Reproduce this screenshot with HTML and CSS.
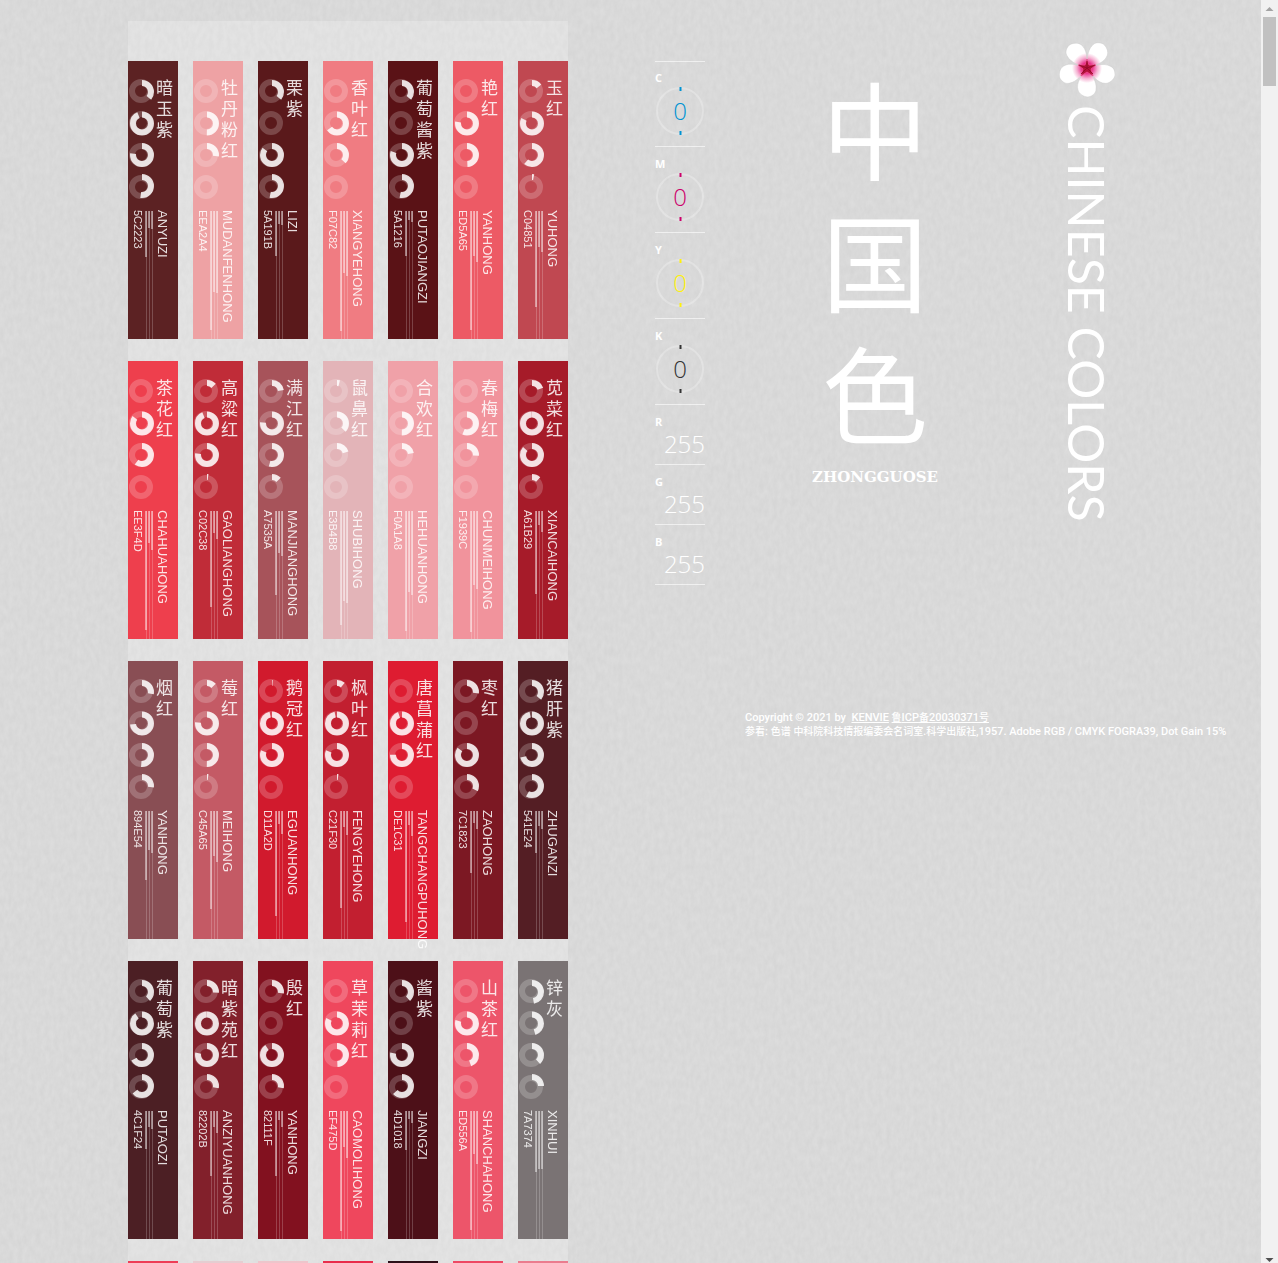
FILE: index.html
```html
<!DOCTYPE html>
<html lang="zh-CN">
<head>
<meta charset="utf-8">
<title>中国色</title>
<link rel="stylesheet" href="styles.css">
</head>
<body>
<svg class="paper" aria-hidden="true">
  <filter id="grain" x="0" y="0" width="100%" height="100%" color-interpolation-filters="sRGB">
    <feTurbulence type="fractalNoise" baseFrequency="0.22 0.12" numOctaves="4" seed="8" stitchTiles="stitch"/>
    <feColorMatrix values="0.04 0 0 0 0.831  0.04 0 0 0 0.831  0.04 0 0 0 0.831  0 0 0 0 1"/>
  </filter>
  <rect width="100%" height="100%" filter="url(#grain)"/>
</svg>
<main class="page">
  <nav class="palette" aria-label="颜色"><ul class="swatches" id="swatches"></ul></nav>

  <dl class="meters" id="meters"></dl>

  <section class="intro">
    <div class="titles">
      <header class="brand">
        <h1 class="brand-name">中国色</h1>
        <p class="brand-pinyin">ZHONGGUOSE</p>
      </header>
      <div class="english">
        <svg class="flower" viewBox="0 0 56 56" aria-hidden="true">
          <defs>
            <radialGradient id="bloom" gradientUnits="userSpaceOnUse" cx="28" cy="26" r="15">
              <stop offset="0" stop-color="#d4004f"/>
              <stop offset=".35" stop-color="#e8308a"/>
              <stop offset=".7" stop-color="#f6b3d3"/>
              <stop offset="1" stop-color="#fff"/>
            </radialGradient>
          </defs>
          <g fill="url(#bloom)" stroke="#c9c9c9" stroke-width=".4">
            <path id="petal" d="M28 26C22 34 17 41 19 48c1 4 6 7 10 7 5-1 8-4 8-8 1-7-4-14-9-21z"/>
            <use href="#petal" transform="rotate(72 28 26)"/>
            <use href="#petal" transform="rotate(144 28 26)"/>
            <use href="#petal" transform="rotate(216 28 26)"/>
            <use href="#petal" transform="rotate(288 28 26)"/>
          </g>
          <path d="M28 17l2 6 7 0-5 4 2 7-6-4-6 4 2-7-5-4 7 0z" fill="#b3123a" stroke="#ef4f8f" stroke-width=".8"/>
          <path d="M28 19v7l6 6M28 26l-6 6M28 26l8-3M28 26l-8-3" fill="none" stroke="#8c0a26" stroke-width=".8"/>
        </svg>
        <p class="english-name">CHINESE COLORS</p>
      </div>
    </div>
    <footer class="credits">
      <p>Copyright © 2021 by &nbsp;<a href="#kenvie">KENVIE</a> <a href="#icp"><span class="han">鲁</span>ICP<span class="han">备</span>20030371<span class="han">号</span></a></p>
      <p><span class="han">参看</span>: <span class="han">色谱</span> <span class="han">中科院科技情报编委会名词室.科学出版社,</span>1957. Adobe RGB / CMYK FOGRA39, Dot Gain 15%</p>
    </footer>
  </section>
</main>
<div class="scrollbar" aria-hidden="true">
  <svg viewBox="0 0 17 17"><path d="M4.500 11h8L8.500 7z" fill="#a3a3a3"/></svg>
  <div class="thumb"></div>
  <svg class="down" viewBox="0 0 17 17"><path d="M4.500 12h8L8.500 16z" fill="#505050"/></svg>
</div>
<script src="app.js"></script>
</body>
</html>
```
FILE: styles.css
```css
* { box-sizing: border-box; }

body {
  margin: 0;
  height: 100vh;
  display: flex;
  overflow: hidden;
  background: #d9d9d9;
  color: #fff;
  font-family: "Open Sans", "Noto Sans CJK SC", sans-serif;
}

h1, p, dl, dd, ul { margin: 0; padding: 0; }

a { color: inherit; }

.paper {
  position: absolute;
  inset: 0;
  width: 100%;
  height: 100%;
  z-index: -1;
}

.page {
  flex: 1;
  min-width: 0;
  display: flex;
  align-items: flex-start;
  padding-left: 128px;
  overflow-y: auto;
  scrollbar-width: none;
}

/* Palette */
.palette {
  flex: none;
  margin-top: 21px;
  padding-top: 40px;
  background: rgba(255, 255, 255, .22);
}

.swatches {
  display: grid;
  grid-template-columns: repeat(7, 50px);
  gap: 22px 15px;
  list-style: none;
}

.swatch {
  display: block;
  height: 278px;
  text-decoration: none;
}

.swatch-top {
  display: flex;
  height: 149px;
  padding-top: 17px;
}

.rings {
  flex: none;
  width: 27px;
  height: 122px;
}

.name {
  writing-mode: vertical-rl;
  width: 19px;
  font-family: "Noto Sans CJK SC", sans-serif;
  font-size: 17px;
  line-height: 19px;
  letter-spacing: 4px;
  padding-top: 1px;
  opacity: .85;
}

.swatch-bottom {
  display: flex;
  height: 129px;
}

.hex, .pinyin {
  writing-mode: vertical-rl;
  font-family: "Liberation Sans", sans-serif;
  white-space: nowrap;
  opacity: .85;
}

.hex {
  width: 17px;
  font-size: 11px;
  line-height: 15px;
}

.pinyin {
  width: 16px;
  font-size: 13px;
  line-height: 16px;
}

.bars {
  display: flex;
  gap: 1px;
  width: 8px;
  margin-right: 1px;
  padding-top: 1px;
}

.bar {
  display: flex;
  justify-content: flex-end;
  width: 2px;
  height: 128px;
  background: linear-gradient(rgba(255, 255, 255, .2), rgba(255, 255, 255, .2)) right / 1px 100% no-repeat;
}

.bar-fill {
  width: 2px;
  background: rgba(255, 255, 255, .45);
}

/* CMYK and RGB readout */
.meters {
  flex: none;
  width: 50px;
  margin: 61px 40px 0 87px;
  border-top: 1px solid rgba(255, 255, 255, .6);
}

.meter {
  height: 60px;
  border-bottom: 1px solid rgba(255, 255, 255, .6);
}

.meter.round { height: 86px; }

.meter:first-child { height: 85px; }

.meter dt {
  padding-top: 9px;
  font-size: 11px;
  font-weight: 700;
  line-height: 15px;
}

.meter dd {
  font-size: 24px;
  font-weight: 300;
  line-height: 30px;
  text-align: right;
}

.meter.round dd {
  display: grid;
  place-items: center;
  line-height: 52px;
}

.meter:first-child dt { padding-top: 8px; }

.dial, .dial-value { grid-area: 1 / 1; }

.dial {
  width: 50px;
  height: 50px;
}

/* Titles */
.intro {
  flex: 1;
  min-width: 0;
}

.titles {
  display: flex;
  height: 711px;
}

.brand {
  width: 260px;
  padding-top: 79px;
  text-align: center;
}

.brand-name {
  width: 130px;
  height: 386px;
  margin: 0 auto;
  writing-mode: vertical-rl;
  font-family: "Noto Sans CJK SC", sans-serif;
  font-size: 106px;
  font-weight: 400;
  line-height: 130px;
  letter-spacing: 26px;
  white-space: nowrap;
}

.brand-pinyin {
  font-family: "DejaVu Serif", serif;
  font-size: 15px;
  font-weight: 700;
  line-height: 24px;
}

.english {
  margin-left: 52px;
  padding-top: 42px;
  display: flex;
  flex-direction: column;
  align-items: center;
}

.flower {
  width: 56px;
  height: 56px;
}

.english-name {
  padding-top: 7px;
  writing-mode: vertical-rl;
  font-family: Lato, sans-serif;
  font-size: 50px;
  line-height: 60px;
  white-space: nowrap;
}

.credits {
  font-family: Roboto, "Noto Sans CJK SC", sans-serif;
  font-size: 11px;
  font-weight: 500;
  line-height: 14px;
  white-space: nowrap;
}

.han { font-size: 10px; }

/* Scroll rail */
.scrollbar {
  flex: none;
  width: 17px;
  display: flex;
  flex-direction: column;
  background: #f1f1f1;
}

.thumb {
  height: 69px;
  margin: 0 2px;
  background: #c1c1c1;
}

.down { margin-top: auto; }
```
FILE: app.js
```js
const colors = [
  ["暗玉紫", "ANYUZI", "5C2223", [36, 93, 77, 52]],
  ["牡丹粉红", "MUDANFENHONG", "EEA2A4", [0, 50, 27, 0]],
  ["栗紫", "LIZI", "5A191B", [36, 0, 85, 53]],
  ["香叶红", "XIANGYEHONG", "F07C82", [0, 65, 37, 0]],
  ["葡萄酱紫", "PUTAOJIANGZI", "5A1216", [36, 0, 80, 53]],
  ["艳红", "YANHONG", "ED5A65", [0, 77, 49, 0]],
  ["玉红", "YUHONG", "C04851", [14, 82, 61, 3]],
  ["茶花红", "CHAHUAHONG", "EE3F4D", [0, 85, 60, 0]],
  ["高粱红", "GAOLIANGHONG", "C02C38", [13, 93, 77, 2]],
  ["满江红", "MANJIANGHONG", "A7535A", [22, 76, 54, 13]],
  ["鼠鼻红", "SHUBIHONG", "E3B4B8", [4, 37, 20, 0]],
  ["合欢红", "HEHUANHONG", "F0A1A8", [0, 50, 22, 0]],
  ["春梅红", "CHUNMEIHONG", "F1939C", [0, 56, 26, 0]],
  ["苋菜红", "XIANCAIHONG", "A61B29", [19, 99, 86, 12]],
  ["烟红", "YANHONG", "894E54", [28, 73, 51, 27]],
  ["莓红", "MEIHONG", "C45A65", [13, 76, 50, 2]],
  ["鹅冠红", "EGUANHONG", "D11A2D", [1, 96, 81, 0]],
  ["枫叶红", "FENGYEHONG", "C21F30", [11, 96, 81, 2]],
  ["唐菖蒲红", "TANGCHANGPUHONG", "DE1C31", [0, 94, 75, 0]],
  ["枣红", "ZAOHONG", "7C1823", [27, 0, 85, 32]],
  ["猪肝紫", "ZHUGANZI", "541E24", [36, 96, 71, 58]],
  ["葡萄紫", "PUTAOZI", "4C1F24", [38, 90, 67, 64]],
  ["暗紫苑红", "ANZIYUANHONG", "82202B", [26, 99, 78, 28]],
  ["殷红", "YANHONG", "82111F", [27, 0, 90, 28]],
  ["草茉莉红", "CAOMOLIHONG", "EF475D", [0, 82, 49, 0]],
  ["酱紫", "JIANGZI", "4D1018", [38, 0, 78, 63]],
  ["山茶红", "SHANCHAHONG", "ED556A", [0, 79, 44, 0]],
  ["锌灰", "XINHUI", "7A7374", [47, 45, 38, 25]],
  ["", "", "EE3D56", [0, 0, 0, 0]],
  ["", "", "E5CDD1", [0, 0, 0, 0]],
  ["", "", "EEC5CB", [0, 0, 0, 0]],
  ["", "", "E92C4B", [0, 0, 0, 0]],
  ["", "", "2D1019", [0, 0, 0, 0]],
  ["", "", "EE4863", [0, 0, 0, 0]],
  ["", "", "EB7C8E", [0, 0, 0, 0]]
];

const baseY = [13, 45, 77, 109];
const arcY = [14, 45.4, 77, 108];
const R = 9;
const LEN = 2 * Math.PI * R;

function rings(cmyk) {
  return cmyk.map((v, i) => {
    const arc = v
      ? `<circle cx="14" cy="${arcY[i]}" r="${R}" stroke-opacity=".84" stroke-dasharray="${(LEN * v / 100).toFixed(2)} 99" transform="rotate(-90 14 ${arcY[i]})"/>`
      : "";
    return `<circle cx="13" cy="${baseY[i]}" r="${R}" stroke-opacity=".2"/>${arc}`;
  }).join("");
}

function bars(hex) {
  return [0, 2, 4].map(i => {
    const h = Math.round(parseInt(hex.substr(i, 2), 16) / 2);
    return `<span class="bar"><span class="bar-fill" style="height:${h}px"></span></span>`;
  }).join("");
}

document.getElementById("swatches").innerHTML = colors.map(([name, pinyin, hex, cmyk]) => `
  <li><a class="swatch" href="#${hex}" style="background:#${hex}">
    <div class="swatch-top">
      <svg class="rings" viewBox="0 0 27 122" fill="none" stroke="#fff" stroke-width="6">${rings(cmyk)}</svg>
      <span class="name">${name}</span>
    </div>
    <div class="swatch-bottom">
      <span class="hex">${name ? hex : ""}</span>
      <span class="bars">${bars(hex)}</span>
      <span class="pinyin">${pinyin}</span>
    </div>
  </a></li>`).join("");

const dials = [["C", "#0093d3"], ["M", "#cc006b"], ["Y", "#fff10c"], ["K", "#333"]];

document.getElementById("meters").innerHTML =
  dials.map(([label, color]) => `
  <div class="meter round"><dt>${label}</dt><dd>
    <svg class="dial" viewBox="0 0 50 50" fill="none">
      <circle cx="25" cy="25" r="23" stroke="#fff" stroke-opacity=".25" stroke-width="2"/>
      <path d="M25.500 1v4M25.500 45v4" stroke="${color}" stroke-width="2"/>
    </svg>
    <span class="dial-value" style="color:${color}">0</span>
  </dd></div>`).join("") +
  ["R", "G", "B"].map(label => `
  <div class="meter"><dt>${label}</dt><dd>255</dd></div>`).join("");
```
